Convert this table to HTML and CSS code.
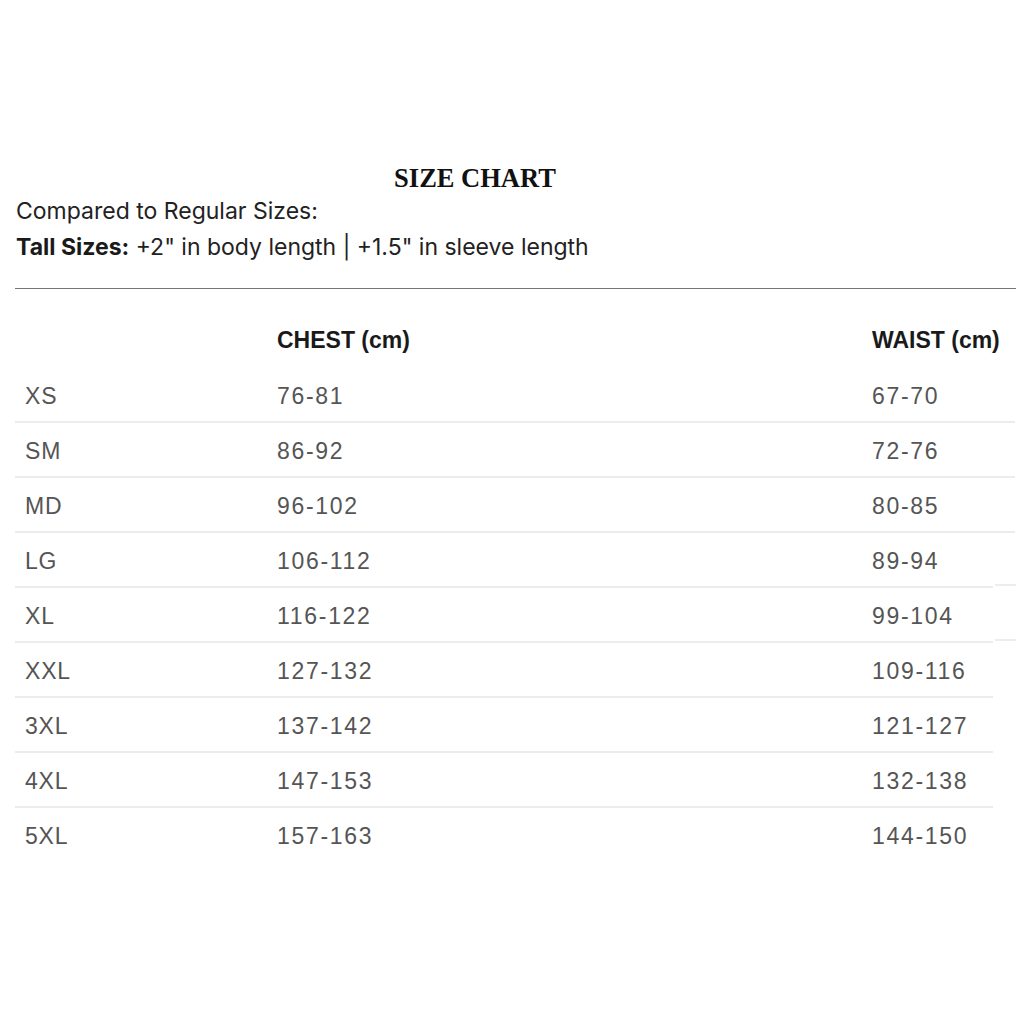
FILE: index.html
```html
<!DOCTYPE html>
<html>
<head>
<meta charset="utf-8">
<link rel="stylesheet" href="styles.css">
</head>
<body>
<div class="page">
  <h1 class="title">SIZE CHART</h1>
  <p class="note">Compared to Regular Sizes:</p>
  <p class="note"><b>Tall Sizes:</b> +2" in body length | +1.5" in sleeve length</p>
  <hr class="rule">
  <div class="table">
    <div class="row head"><span></span><span>CHEST (cm)</span><span>WAIST (cm)</span></div>
    <div class="row"><span>XS</span><span class="num">76-81</span><span class="num">67-70</span></div>
    <div class="row"><span>SM</span><span class="num">86-92</span><span class="num">72-76</span></div>
    <div class="row"><span>MD</span><span class="num">96-102</span><span class="num">80-85</span></div>
    <div class="row short nub"><span>LG</span><span class="num">106-112</span><span class="num">89-94</span></div>
    <div class="row short nub"><span>XL</span><span class="num">116-122</span><span class="num">99-104</span></div>
    <div class="row short"><span>XXL</span><span class="num">127-132</span><span class="num">109-116</span></div>
    <div class="row short"><span>3XL</span><span class="num">137-142</span><span class="num">121-127</span></div>
    <div class="row short"><span>4XL</span><span class="num">147-153</span><span class="num">132-138</span></div>
    <div class="row last"><span>5XL</span><span class="num">157-163</span><span class="num">144-150</span></div>
  </div>
</div>
</body>
</html>
```

FILE: styles.css
```css
html, body {
  margin: 0;
  padding: 0;
  background: #fff;
}

.page {
  width: 1000px;
  padding: 163px 0 0 15px;
}

.title {
  margin: 0;
  width: 920px;
  text-align: center;
  font-family: "Liberation Serif", "Times New Roman", serif;
  font-weight: bold;
  font-size: 26.5px;
  line-height: 30px;
  color: #111;
}

.note {
  margin: 0;
  padding-left: 1px;
  font-family: Inter, "Noto Sans", sans-serif;
  font-size: 23px;
  line-height: 36px;
  color: #222;
}

.note b {
  font-weight: 700;
  color: #1a1a1a;
}

.rule {
  margin: 23px 0 0 0;
  border: 0;
  height: 1px;
  background: #767676;
  width: 1001px;
}

.table {
  font-family: "Liberation Sans", Arial, sans-serif;
  font-size: 23px;
  color: #555;
}

.row {
  position: relative;
  display: grid;
  grid-template-columns: 252px 595px 153px;
  padding-top: 4px;
  line-height: 49px;
  border-bottom: 2px solid #ececec;
  width: 1000px;
}

.row span {
  padding-left: 10px;
  white-space: nowrap;
  letter-spacing: 0.8px;
}

.row span.num {
  letter-spacing: 1.7px;
}

.row.head {
  padding-top: 24px;
  line-height: 55px;
  border-bottom: 0;
  font-weight: bold;
  color: #1a1a1a;
}

.row.head span {
  letter-spacing: 0;
}

.row.short {
  width: 978px;
}

.row.nub::after {
  content: "";
  position: absolute;
  left: 980px;
  bottom: 0;
  width: 21px;
  height: 2px;
  background: #ededed;
}

.row.last {
  border-bottom: 0;
}
```
